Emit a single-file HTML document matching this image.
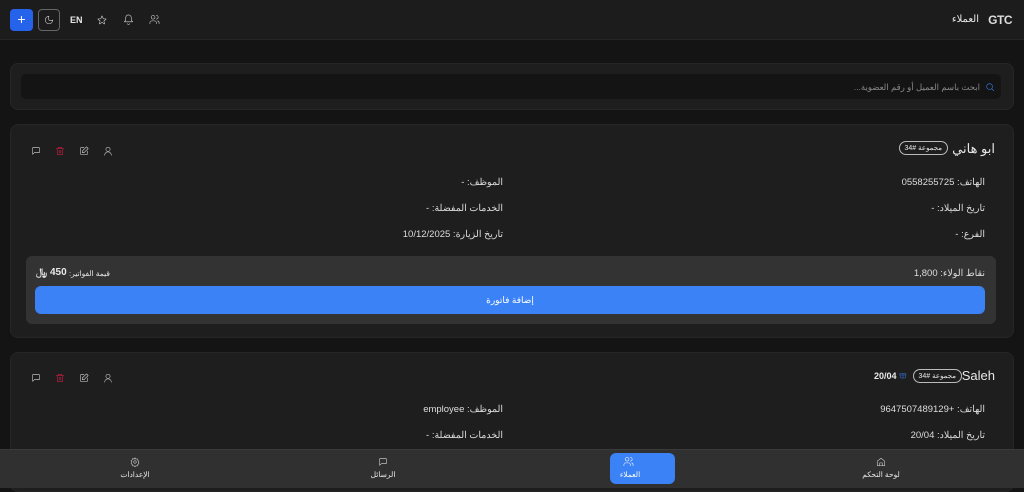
<!DOCTYPE html><html dir="rtl"><head><meta charset="utf-8"><style>
*{box-sizing:border-box;margin:0;padding:0}
body{width:1024px;height:488px;overflow:hidden;background:#141414;color:#e8e8e8;font-family:"Liberation Sans","Noto Sans CJK SC",sans-serif;font-size:9px;position:relative}
.abs{position:absolute}
.hdr{left:0;top:0;width:1024px;height:40px;background:#1c1c1c;border-bottom:1px solid #262626}
.panel{background:#1e1e1e;border-radius:8px;border:1px solid #262626}
.row{position:absolute;font-size:9.5px;color:#ddd;white-space:nowrap}
svg{fill:none;stroke:#ddd;stroke-width:1.3;stroke-linecap:round;stroke-linejoin:round}
.badge{border:1px solid #bbb;border-radius:8px;font-size:7px;padding:1px 5px;height:14px;line-height:11px}
</style></head><body>
<div class="abs hdr"></div>
<div class="abs" style="left:10px;top:9px;width:23px;height:22px;background:#2563eb;border-radius:4px;color:#fff;font-size:14px;text-align:center;line-height:21px">+</div>
<div class="abs" style="left:38px;top:9px;width:22px;height:22px;border:1px solid #666;border-radius:4px"></div>
<svg class="abs" style="left:44px;top:15px" width="10" height="10" viewBox="0 0 24 24"><path d="M12 3a6 6 0 0 0 9 9 9 9 0 1 1-9-9z"/></svg>
<div class="abs" style="left:70px;top:15px;font-size:9px;font-weight:bold;direction:ltr">EN</div>
<svg class="abs" style="left:97px;top:15px" width="10" height="10" viewBox="0 0 24 24"><path d="M12 2l3 7 7 .6-5.5 4.8 1.7 7.1L12 17.8 5.8 21.5l1.7-7.1L2 9.6 9 9z"/></svg>
<svg class="abs" style="left:123px;top:14px" width="11" height="11" viewBox="0 0 24 24"><path d="M6 8a6 6 0 0 1 12 0c0 7 3 9 3 9H3s3-2 3-9M10 21a2 2 0 0 0 4 0"/></svg>
<svg class="abs" style="left:149px;top:14px" width="11" height="11" viewBox="0 0 24 24"><circle cx="9" cy="7" r="4"/><path d="M2 21v-2a4 4 0 0 1 4-4h6a4 4 0 0 1 4 4v2M16 3a4 4 0 0 1 0 8M22 21v-2a4 4 0 0 0-3-3.9"/></svg>
<div class="abs" style="right:12px;top:13px;font-size:12px;font-weight:bold;direction:ltr;color:#ddd;letter-spacing:-0.5px">GTC</div>
<div class="abs" style="right:45px;top:14px;font-size:10px">العملاء</div>

<div class="abs panel" style="left:10px;top:63px;width:1004px;height:47px"></div>
<div class="abs" style="left:21px;top:74px;width:980px;height:25px;background:#141414;border-radius:5px"></div>
<svg class="abs" style="left:985px;top:82px;stroke:#3b82f6" width="10" height="10" viewBox="0 0 24 24"><circle cx="11" cy="11" r="7"/><path d="M21 21l-5-5"/></svg>
<div class="abs" style="right:44px;top:82px;color:#888;font-size:8.5px">ابحث باسم العميل أو رقم العضوية...</div>

<!-- card 1 -->
<div class="abs panel" style="left:10px;top:124px;width:1004px;height:214px"></div>
<div class="abs" style="right:29px;top:141px;font-size:13px">ابو هاني</div>
<div class="abs badge" style="right:76px;top:141px">مجموعة #34</div>
<svg class="abs" style="left:31px;top:146px" width="10" height="10" viewBox="0 0 24 24"><path d="M4 4h16v12H8l-4 4z"/></svg>
<svg class="abs" style="left:55px;top:146px;stroke:#e11d48" width="10" height="10" viewBox="0 0 24 24"><path d="M3 6h18M8 6V3h8v3M5 6l1 15h12l1-15M10 10v7M14 10v7"/></svg>
<svg class="abs" style="left:79px;top:146px" width="10" height="10" viewBox="0 0 24 24"><path d="M12 4H4v16h16v-8M18 2l4 4-10 10H8v-4z"/></svg>
<svg class="abs" style="left:103px;top:146px" width="10" height="10" viewBox="0 0 24 24"><circle cx="12" cy="8" r="5"/><path d="M4 22a8 8 0 0 1 16 0"/></svg>
<div class="row" style="right:39px;top:177px">الهاتف: 0558255725</div>
<div class="row" style="right:39px;top:203px">تاريخ الميلاد: -</div>
<div class="row" style="right:39px;top:229px">الفرع: -</div>
<div class="row" style="right:521px;top:177px">الموظف: -</div>
<div class="row" style="right:521px;top:203px">الخدمات المفضلة: -</div>
<div class="row" style="right:521px;top:229px">تاريخ الزيارة: 10/12/2025</div>
<div class="abs" style="left:26px;top:256px;width:970px;height:68px;background:#333;border-radius:6px"></div>
<div class="row" style="right:39px;top:268px">نقاط الولاء: 1,800</div>
<div class="abs" style="left:36px;top:267px;font-size:10px;font-weight:bold">﷼</div>
<div class="abs" style="left:50px;top:267px;font-size:10px;font-weight:bold;direction:ltr">450</div>
<div class="abs" style="left:69px;top:269px;font-size:7.5px;white-space:nowrap">قيمة الفواتير:</div>
<div class="abs" style="left:35px;top:286px;width:950px;height:28px;background:#3b82f6;border-radius:6px;color:#fff;text-align:center;line-height:28px;font-size:9px">إضافة فاتورة</div>

<!-- card 2 -->
<div class="abs panel" style="left:10px;top:352px;width:1004px;height:140px"></div>
<div class="abs" style="right:29px;top:368px;font-size:13px;direction:ltr">Saleh</div>
<div class="abs badge" style="right:62px;top:369px">مجموعة #34</div>
<svg class="abs" style="left:899px;top:371px;stroke:#3b82f6" width="8" height="8" viewBox="0 0 24 24"><path d="M3 8h18v4H3zM5 12v9h14v-9M12 8v13"/></svg>
<div class="abs" style="left:874px;top:371px;font-size:9px;font-weight:bold;direction:ltr">20/04</div>
<svg class="abs" style="left:31px;top:373px" width="10" height="10" viewBox="0 0 24 24"><path d="M4 4h16v12H8l-4 4z"/></svg>
<svg class="abs" style="left:55px;top:373px;stroke:#e11d48" width="10" height="10" viewBox="0 0 24 24"><path d="M3 6h18M8 6V3h8v3M5 6l1 15h12l1-15M10 10v7M14 10v7"/></svg>
<svg class="abs" style="left:79px;top:373px" width="10" height="10" viewBox="0 0 24 24"><path d="M12 4H4v16h16v-8M18 2l4 4-10 10H8v-4z"/></svg>
<svg class="abs" style="left:103px;top:373px" width="10" height="10" viewBox="0 0 24 24"><circle cx="12" cy="8" r="5"/><path d="M4 22a8 8 0 0 1 16 0"/></svg>
<div class="row" style="right:39px;top:404px">الهاتف: +9647507489129</div>
<div class="row" style="right:39px;top:430px">تاريخ الميلاد: 20/04</div>
<div class="row" style="right:521px;top:404px">الموظف: employee</div>
<div class="row" style="right:521px;top:430px">الخدمات المفضلة: -</div>

<!-- bottom nav -->
<div class="abs" style="left:0;top:449px;width:1024px;height:39px;background:#303030;border-top:1px solid #3a3a3a"></div>
<div class="abs" style="left:610px;top:453px;width:65px;height:31px;background:#3b82f6;border-radius:6px"></div>
<svg class="abs" style="left:623px;top:456px;stroke:#fff" width="11" height="11" viewBox="0 0 24 24"><circle cx="9" cy="7" r="4"/><path d="M2 21v-2a4 4 0 0 1 4-4h6a4 4 0 0 1 4 4v2M16 3a4 4 0 0 1 0 8M22 21v-2a4 4 0 0 0-3-3.9"/></svg>
<div class="abs" style="left:610px;top:470px;width:40px;text-align:center;font-size:7.5px;color:#fff">العملاء</div>
<svg class="abs" style="left:876px;top:457px" width="10" height="10" viewBox="0 0 24 24"><path d="M3 10l9-7 9 7v11H3zM9 21v-7h6v7"/></svg>
<div class="abs" style="left:855px;top:470px;width:52px;text-align:center;font-size:7.5px">لوحة التحكم</div>
<svg class="abs" style="left:378px;top:457px" width="10" height="10" viewBox="0 0 24 24"><path d="M4 4h16v12H8l-4 4z"/></svg>
<div class="abs" style="left:363px;top:470px;width:40px;text-align:center;font-size:7.5px">الرسائل</div>
<svg class="abs" style="left:130px;top:457px" width="10" height="10" viewBox="0 0 24 24"><circle cx="12" cy="12" r="3"/><path d="M12 2l2 3 3.5-.5 1 3.5 3 2-1.5 3 1.5 3-3 2-1 3.5L14 21l-2 3-2-3-3.5.5-1-3.5-3-2L4 12 2.5 9l3-2 1-3.5L10 5z"/></svg>
<div class="abs" style="left:115px;top:470px;width:40px;text-align:center;font-size:7.5px">الإعدادات</div>
</body></html>
